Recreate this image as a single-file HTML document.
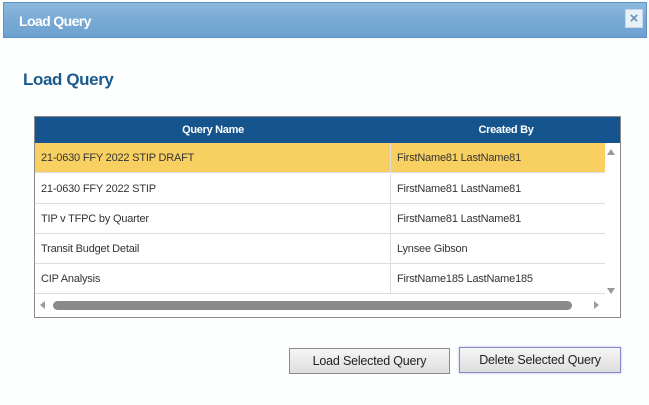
<!DOCTYPE html>
<html><head><meta charset="utf-8"><style>
*{margin:0;padding:0;box-sizing:border-box}
body{width:649px;height:405px;background:#fdfefe;font-family:"Liberation Sans",sans-serif;position:relative;overflow:hidden}
.bar{position:absolute;left:3px;top:2px;width:644px;height:36px;background:linear-gradient(#8cb8dc,#79aad5 50%,#6da2d0);border:1px solid #5b93c6}
.bar span{position:absolute;left:15px;top:10px;color:#fff;font-weight:bold;font-size:14px;letter-spacing:-0.6px}
.x{position:absolute;right:3px;top:6px;width:18px;height:19px;background:#e8f0f8;border:1px solid #c8d8e8;color:#6a8fb5;font-size:15px;font-weight:bold;text-align:center;line-height:17px}
h1{position:absolute;left:23px;top:70px;font-size:17px;color:#1c5a8e;font-weight:bold;letter-spacing:-0.4px}
.grid{position:absolute;left:34px;top:116px;width:587px;height:202px;border:1px solid #8a8a8a;background:#fff}
.hd{position:absolute;left:0;top:0;width:585px;height:26px;background:#15548d;color:#fff;font-weight:bold;font-size:11px;letter-spacing:-0.3px}
.hd div{position:absolute;top:7px;text-align:center}
.row{position:absolute;left:0;width:570px;height:30px;border-bottom:1px solid #dcdcdc;font-size:11px;color:#333;letter-spacing:-0.2px}
.row div{position:absolute;top:9px}
.row .a{left:6px}.row .b{left:362px}
.row:after{content:"";position:absolute;left:355px;top:0;width:1px;height:30px;background:#dcdcdc}
.sel{background:#f8d062}
.hs{position:absolute;left:18px;top:184px;width:519px;height:9px;border-radius:5px;background:#8a8a8a}
.tri{position:absolute;width:0;height:0}
.btn{position:absolute;height:26px;border:1px solid #8a8a8a;background:linear-gradient(#f6f6f6,#dedede);font-size:12.5px;color:#222;text-align:center;line-height:24px;letter-spacing:-0.2px}
</style></head><body>
<div class="bar"><span>Load Query</span><div class="x">×</div></div>
<h1>Load Query</h1>
<div class="grid">
 <div class="hd"><div style="left:0;width:356px">Query Name</div><div style="left:356px;width:230px">Created By</div></div>
 <div class="row sel" style="top:26px"><div class="a">21-0630 FFY 2022 STIP DRAFT</div><div class="b">FirstName81 LastName81</div></div>
 <div class="row" style="top:57px"><div class="a">21-0630 FFY 2022 STIP</div><div class="b">FirstName81 LastName81</div></div>
 <div class="row" style="top:87px"><div class="a">TIP v TFPC by Quarter</div><div class="b">FirstName81 LastName81</div></div>
 <div class="row" style="top:117px"><div class="a">Transit Budget Detail</div><div class="b">Lynsee Gibson</div></div>
 <div class="row" style="top:147px"><div class="a">CIP Analysis</div><div class="b">FirstName185 LastName185</div></div>
 <div class="tri" style="left:572px;top:32px;border-left:4px solid transparent;border-right:4px solid transparent;border-bottom:6px solid #999"></div>
 <div class="tri" style="left:572px;top:171px;border-left:4px solid transparent;border-right:4px solid transparent;border-top:6px solid #999"></div>
 <div class="tri" style="left:5px;top:184px;border-top:4px solid transparent;border-bottom:4px solid transparent;border-right:5px solid #999"></div>
 <div class="tri" style="left:559px;top:184px;border-top:4px solid transparent;border-bottom:4px solid transparent;border-left:5px solid #999"></div>
 <div class="hs"></div>
</div>
<div class="btn" style="left:289px;top:348px;width:161px">Load Selected Query</div>
<div class="btn" style="left:459px;top:347px;width:162px;border-color:#8888cc;box-shadow:0 0 2px #b0b0ff">Delete Selected Query</div>
</body></html>
